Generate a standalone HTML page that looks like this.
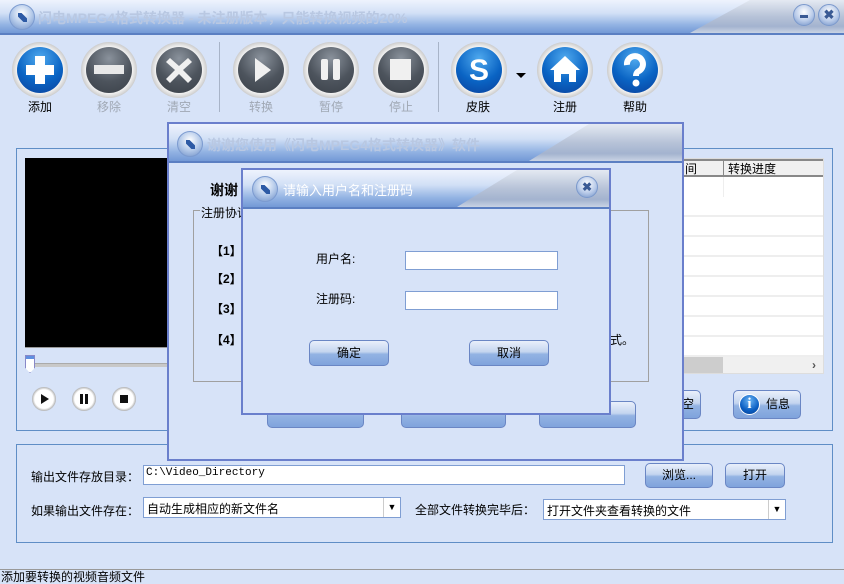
<!DOCTYPE html>
<html><head><meta charset="utf-8"><style>
*{margin:0;padding:0;box-sizing:border-box}
body{width:844px;height:584px;overflow:hidden;background:#d7e3f8;font-family:"Liberation Sans","Noto Sans CJK SC","WenQuanYi Zen Hei",sans-serif;font-size:12px;color:#000;position:relative}
.a{position:absolute}
.tb{background:linear-gradient(#eef3fd 0%,#d2e0f6 40%,#93b3e3 75%,#7399d6 100%);border-bottom:2px solid #5b7fc2;overflow:hidden}
.sw{position:absolute;top:0;bottom:0;background:linear-gradient(#e4e9f2,#b7c3d8 50%,#a3b3cf 80%,#c9d3e4);clip-path:polygon(60px 0,100% 0,100% 100%,0 100%)}
.logo{position:absolute;width:26px;height:26px;border-radius:50%;background:radial-gradient(circle at 50% 35%,#fff,#b6cbea 50%,#6d8fc7);border:1px solid #7c9bd0}
.logo:after{content:"";position:absolute;left:8px;top:8px;width:9px;height:9px;background:#2d5aa5;clip-path:polygon(0 0,40% 0,100% 60%,100% 100%,60% 100%,0 40%)}
.ic{position:absolute;width:56px;height:56px;border-radius:50%;background:radial-gradient(circle,#f4f4f4 58%,#c8c8c8 72%,#9a9a9a 88%,#7a7a7a);}
.ic i{position:absolute;left:5px;top:5px;width:46px;height:46px;border-radius:50%;background:radial-gradient(circle at 50% 25%,#8a929c,#4d545d 55%,#3a4048);display:block}
.ic.b i{background:radial-gradient(circle at 50% 25%,#4fa9ee,#0a64c4 55%,#0b3f9a)}
.ic svg{position:absolute;left:5px;top:5px}
.lb{position:absolute;font-size:12px;width:60px;text-align:center}
.g{color:#a0a8b4}
.btn{position:absolute;border:1px solid #6a86c4;border-radius:5px;background:linear-gradient(#e9effb,#c4d5ef 45%,#93b3e3 55%,#7fa3dc);text-align:center;font-size:12px}
.inp{position:absolute;background:#fff;border:1px solid #7f9ed3}
.pb{position:absolute;width:24px;height:24px;border-radius:50%;background:radial-gradient(circle,#fff 55%,#999 75%,#555);}
</style></head><body>

<div class="a tb" style="left:0;top:0;width:844px;height:35px">
 <div class="sw" style="left:690px;width:154px"></div>
 <div class="logo" style="left:9px;top:4px"></div>
 <div class="a" style="left:38px;top:8px;font-size:14px;font-weight:bold;color:#b9c8e2">闪电MPEG4格式转换器 - 未注册版本，只能转换视频的20%</div>
 <div class="a" style="left:793px;top:4px;width:22px;height:22px;border-radius:50%;background:radial-gradient(circle at 50% 35%,#fff,#b9cbe9 55%,#6e8fc6);border:1px solid #7b99cc"><div class="a" style="left:6px;top:10px;width:8px;height:3px;background:#3a5a94"></div></div>
 <div class="a" style="left:818px;top:4px;width:22px;height:22px;border-radius:50%;background:radial-gradient(circle at 50% 35%,#fff,#b9cbe9 55%,#6e8fc6);border:1px solid #7b99cc;text-align:center;font-weight:bold;color:#3a5a94;font-size:13px;line-height:20px">✖</div>
</div>

<div class="ic b" style="left:12px;top:42px"><i></i><svg width="46" height="46"><path d="M18 9h10v9h9v10h-9v9H18v-9H9V18h9z" fill="#fff"/></svg></div>
<div class="ic" style="left:81px;top:42px"><i></i><svg width="46" height="46"><rect x="8" y="18" width="30" height="9" fill="#e8e8e8"/></svg></div>
<div class="ic" style="left:151px;top:42px"><i></i><svg width="46" height="46"><path d="M14 11l9 8 9-8 4 4-9 8 9 9-4 4-9-9-9 9-4-4 9-9-9-8z" fill="#f0f0f0"/></svg></div>
<div class="a" style="left:219px;top:42px;width:1px;height:70px;background:#a8b4c8"></div>
<div class="ic" style="left:233px;top:42px"><i></i><svg width="46" height="46"><path d="M17 11l16 12-16 12z" fill="#f0f0f0"/></svg></div>
<div class="ic" style="left:303px;top:42px"><i></i><svg width="46" height="46"><rect x="13" y="12" width="7" height="21" rx="2" fill="#f0f0f0"/><rect x="25" y="12" width="7" height="21" rx="2" fill="#f0f0f0"/></svg></div>
<div class="ic" style="left:373px;top:42px"><i></i><svg width="46" height="46"><rect x="12" y="12" width="21" height="21" fill="#f0f0f0"/></svg></div>
<div class="a" style="left:438px;top:42px;width:1px;height:70px;background:#a8b4c8"></div>
<div class="ic b" style="left:451px;top:42px"><i></i><svg width="46" height="46"><text x="23" y="33" text-anchor="middle" font-family="Liberation Sans" font-weight="bold" font-size="30" fill="#fff">S</text></svg></div>
<div class="a" style="left:516px;top:73px;width:0;height:0;border-left:5px solid transparent;border-right:5px solid transparent;border-top:5px solid #000"></div>
<div class="ic b" style="left:537px;top:42px"><i></i><svg width="46" height="46"><path d="M23 9l15 14h-4v12h-7v-8h-8v8h-7V23H8z" fill="#fff"/></svg></div>
<div class="ic b" style="left:607px;top:42px"><i></i><svg width="46" height="46"><path d="M15 18a8 8 0 1 1 12 6c-2 1-3 2-3 5" stroke="#fff" stroke-width="6" fill="none"/><circle cx="24" cy="36" r="3.5" fill="#fff"/></svg></div>
<div class="lb" style="left:10px;top:98px">添加</div>
<div class="lb g" style="left:79px;top:98px">移除</div>
<div class="lb g" style="left:149px;top:98px">清空</div>
<div class="lb g" style="left:231px;top:98px">转换</div>
<div class="lb g" style="left:301px;top:98px">暂停</div>
<div class="lb g" style="left:371px;top:98px">停止</div>
<div class="lb" style="left:448px;top:98px">皮肤</div>
<div class="lb" style="left:535px;top:98px">注册</div>
<div class="lb" style="left:605px;top:98px">帮助</div>

<div class="a" style="left:16px;top:148px;width:817px;height:283px;border:1px solid #5f8ec6"></div>
<div class="a" style="left:25px;top:158px;width:145px;height:190px;background:#000;border-bottom:1px solid #999"></div>
<div class="a" style="left:25px;top:363px;width:145px;height:4px;background:#c8c8c8;border-top:1px solid #aaa"></div>
<div class="a" style="left:25px;top:355px;width:10px;height:18px;background:linear-gradient(#5f8fe0 20%,#fff 20%);border:1px solid #8888c8;clip-path:polygon(0 0,100% 0,100% 70%,50% 100%,0 70%)"></div>
<div class="pb" style="left:32px;top:387px"><svg width="24" height="24"><path d="M9 7l8 5-8 5z" fill="#111"/></svg></div>
<div class="pb" style="left:72px;top:387px"><svg width="24" height="24"><rect x="8" y="7" width="3" height="10" fill="#111"/><rect x="13" y="7" width="3" height="10" fill="#111"/></svg></div>
<div class="pb" style="left:112px;top:387px"><svg width="24" height="24"><rect x="8" y="8" width="8" height="8" fill="#111"/></svg></div>

<div class="a" style="left:670px;top:158px;width:154px;height:216px;background:#fff;border:1px solid #ddd;overflow:hidden">
 <div class="a" style="left:0;top:0;width:154px;height:18px;background:#f0f0f0;border-top:2px solid #888;border-bottom:2px solid #888"></div>
 <div class="a" style="left:52px;top:1px;width:1px;height:16px;background:#888"></div>
 <div class="a" style="left:14px;top:1px">间</div>
 <div class="a" style="left:57px;top:1px">转换进度</div>
 <div class="a" style="left:52px;top:18px;width:1px;height:180px;background:#eee"></div>
 <div class="a" style="left:0;top:38px;width:154px;height:160px;background:repeating-linear-gradient(#fff 0 18px,#eee 18px 20px)"></div>
 <div class="a" style="left:0;top:198px;width:154px;height:17px;background:#f0f0f0"></div>
 <div class="a" style="left:0;top:198px;width:52px;height:17px;background:#cdcdcd"></div>
 <div class="a" style="left:141px;top:199px;color:#555;font-weight:bold">›</div>
</div>
<div class="btn" style="left:660px;top:390px;width:41px;height:29px;line-height:27px;text-align:right;padding-right:6px">空</div>
<div class="btn" style="left:733px;top:390px;width:68px;height:29px;line-height:27px;padding-left:22px">信息
 <div class="a" style="left:5px;top:3px;width:21px;height:21px;border-radius:50%;background:radial-gradient(circle at 50% 30%,#6bb5f5,#0a5ec2 60%,#083d8e);border:1px solid #fff;color:#fff;font-weight:bold;font-family:'Liberation Serif';font-size:15px;line-height:19px;text-align:center">i</div></div>

<div class="a" style="left:16px;top:444px;width:817px;height:99px;border:1px solid #5f8ec6"></div>
<div class="a" style="left:31px;top:468px">输出文件存放目录：</div>
<div class="inp" style="left:143px;top:465px;width:482px;height:20px;font-family:'Liberation Mono';font-size:11px;padding:1px 2px">C:\Video_Directory</div>
<div class="btn" style="left:645px;top:463px;width:68px;height:25px;line-height:23px">浏览...</div>
<div class="btn" style="left:725px;top:463px;width:60px;height:25px;line-height:23px">打开</div>
<div class="a" style="left:31px;top:502px">如果输出文件存在：</div>
<div class="inp" style="left:143px;top:497px;width:258px;height:21px;padding:2px 3px">自动生成相应的新文件名<div class="a" style="right:0;top:0;width:17px;height:19px;background:#fff;border-left:1px solid #ccc;font-size:9px;text-align:center;line-height:19px">▼</div></div>
<div class="a" style="left:415px;top:501px">全部文件转换完毕后：</div>
<div class="inp" style="left:543px;top:499px;width:243px;height:21px;padding:2px 3px">打开文件夹查看转换的文件<div class="a" style="right:0;top:0;width:17px;height:19px;background:#fff;border-left:1px solid #ccc;font-size:9px;text-align:center;line-height:19px">▼</div></div>

<div class="a" style="left:0;top:569px;width:844px;height:15px;border-top:1px solid #999;background:#d7e3f8;padding-left:1px;line-height:14px">添加要转换的视频音频文件</div>

<div class="a" style="left:167px;top:122px;width:517px;height:339px;border:2px solid #6a7fcc;background:#d7e3f8">
 <div class="a tb" style="left:0;top:0;width:513px;height:39px">
  <div class="sw" style="left:360px;width:153px"></div>
  <div class="logo" style="left:8px;top:7px"></div>
  <div class="a" style="left:38px;top:11px;font-size:14px;font-weight:bold;color:#b9c8e2">谢谢您使用《闪电MPEG4格式转换器》软件</div>
 </div>
 <div class="a" style="left:41px;top:56px;font-size:14px;font-weight:bold">谢谢</div>
 <div class="a" style="left:24px;top:86px;width:456px;height:172px;border:1px solid #a0a0a0"></div>
 <div class="a" style="left:31px;top:80px;background:#d7e3f8;padding:0 1px">注册协议</div>
 <div class="a" style="left:42px;top:118px;font-weight:bold">【1】</div>
 <div class="a" style="left:42px;top:146px;font-weight:bold">【2】</div>
 <div class="a" style="left:42px;top:176px;font-weight:bold">【3】</div>
 <div class="a" style="left:42px;top:207px;font-weight:bold">【4】</div>
 <div class="a" style="left:441px;top:207px">式。</div>
 <div class="btn" style="left:98px;top:277px;width:97px;height:27px"></div>
 <div class="btn" style="left:232px;top:277px;width:105px;height:27px"></div>
 <div class="btn" style="left:370px;top:277px;width:97px;height:27px"></div>
</div>

<div class="a" style="left:241px;top:168px;width:370px;height:247px;border:2px solid #6a7fcc;background:#d7e3f8">
 <div class="a tb" style="left:0;top:0;width:366px;height:39px">
  <div class="sw" style="left:214px;width:152px"></div>
  <div class="logo" style="left:9px;top:6px"></div>
  <div class="a" style="left:40px;top:10px;font-size:13px;color:#fff">请输入用户名和注册码</div>
  <div class="a" style="left:333px;top:6px;width:22px;height:22px;border-radius:50%;background:radial-gradient(circle at 50% 35%,#fff,#b9cbe9 55%,#6e8fc6);border:1px solid #7b99cc;text-align:center;font-weight:bold;color:#3a5a94;font-size:12px;line-height:20px">✖</div>
 </div>
 <div class="a" style="left:73px;top:80px">用户名:</div>
 <div class="a" style="left:73px;top:120px">注册码:</div>
 <div class="inp" style="left:162px;top:81px;width:153px;height:19px"></div>
 <div class="inp" style="left:162px;top:121px;width:153px;height:19px"></div>
 <div class="btn" style="left:66px;top:170px;width:80px;height:26px;line-height:24px">确定</div>
 <div class="btn" style="left:226px;top:170px;width:80px;height:26px;line-height:24px">取消</div>
</div>
</body></html>
